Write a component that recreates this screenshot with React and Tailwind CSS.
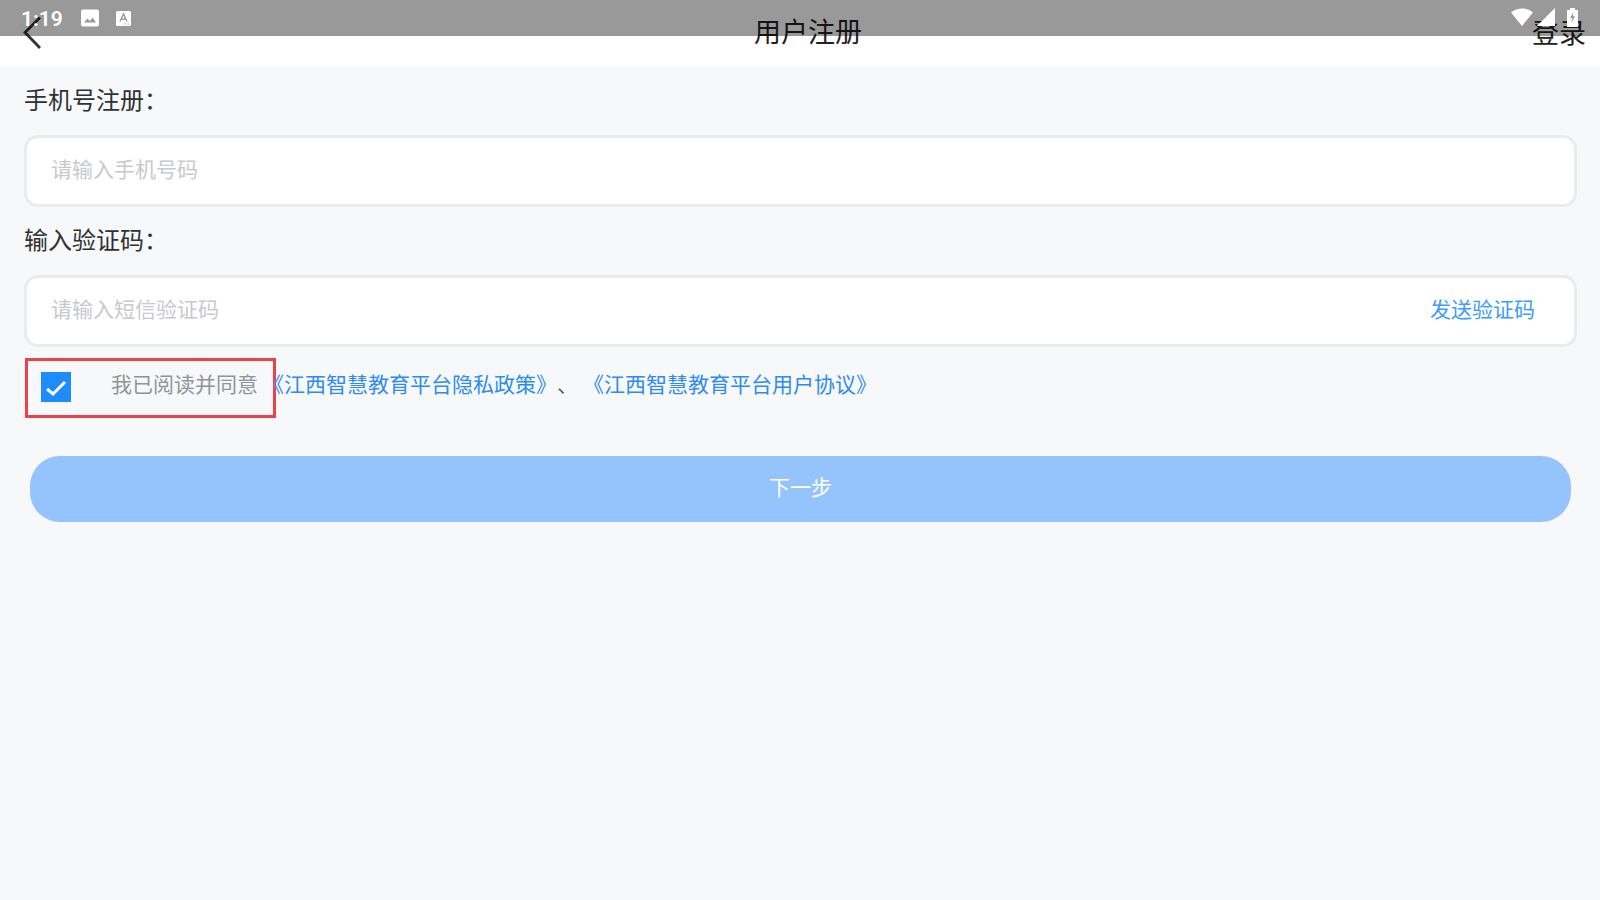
import React from 'react';

const cjk = '"Noto Sans CJK SC", "Noto Sans", sans-serif';

// the bar is see-through, so the page title shows under it and the white icons sit on top
function StatusBar() {
  return (
    <div className="absolute top-0 left-0 right-0 h-[36px] bg-black/40 flex items-center justify-between pl-[21px] pr-[22px]">
      <div className="flex items-center">
        <span className="mt-[3px] text-[21px] font-semibold text-white font-['Roboto'] w-[60px]">1:19</span>
        <svg width="18" height="18" viewBox="0 0 18 18" className="mr-[17px]">
          <rect x="0" y="0.5" width="18" height="17" rx="2" fill="#fff" />
          <path d="M3 13.5 L6.5 9.5 L9 12 L11.5 8.5 L15 13.5 Z" fill="#999" />
        </svg>
        <svg width="15" height="15" viewBox="0 0 15 15">
          <rect width="15" height="15" rx="1.5" fill="#fff" />
          <path d="M4 10.5 L7.5 3 L11 10.5 M5.3 8 H9.7" stroke="#999" strokeWidth="1.4" fill="none" />
          <path d="M8 13 h1 M10 13 h1 M12 13 h1" stroke="#999" strokeWidth="1" />
        </svg>
      </div>
      <div className="flex items-center mb-[2px]">
        <svg width="22" height="18" viewBox="0 0 22 18">
          <path d="M0 4.5 C6 -1 16 -1 22 4.5 L11 18 Z" fill="#fff" />
        </svg>
        <svg width="18" height="18" viewBox="0 0 18 18" className="ml-[4px]">
          <path d="M18 0 V18 H0 Z" fill="#fff" />
        </svg>
        <svg width="11" height="19" viewBox="0 0 11 19" className="ml-[12px]">
          <path d="M3 0 H8 V2 H11 V19 H0 V2 H3 Z" fill="#fff" />
          <path d="M6.5 4 L3 10 H5.2 L4.3 15 L8 8.2 H5.8 Z" fill="#999" />
        </svg>
      </div>
    </div>
  );
}

function Field({ label, placeholder, action }) {
  return (
    <div>
      <div className="h-[34px] mb-[19px] flex items-center text-[24px] leading-[34px] text-[#303133]">{label}</div>
      <div className="h-[72px] bg-white border-[3px] border-[#e9ebee] rounded-[14px] flex items-center justify-between pl-[24px] pr-[39px] pb-[5px]">
        <span className="text-[21px] text-[#c8c9cc]">{placeholder}</span>
        {action && <span className="text-[21px] text-[#3c9cff]">{action}</span>}
      </div>
    </div>
  );
}

export default function App() {
  return (
    <div className="relative w-[1600px] h-[900px] overflow-hidden bg-[#f7f8fa]" style={{ fontFamily: cjk }}>
      <div className="relative h-[66px] bg-white flex items-start justify-between pl-[20px] pr-[14px] pt-[13px] text-[#222222]">
        <svg width="22" height="38" viewBox="0 0 22 38" className="mt-[1px]">
          <path d="M20 3.5 L5 18.5 L20 34" stroke="#333" strokeWidth="2.8" fill="none" />
        </svg>
        <span className="absolute left-[754px] top-[12px] text-[27px] leading-[38px]">用户注册</span>
        <span className="text-[27px] leading-[38px]">登录</span>
      </div>
      <StatusBar />

      <div className="pl-[24px] pr-[23px] pt-[16px] flex flex-col gap-[15px]">
        <Field label="手机号注册：" placeholder="请输入手机号码" />
        <Field label="输入验证码：" placeholder="请输入短信验证码" action="发送验证码" />
      </div>

      <div className="flex items-center ml-[25px] mt-[11px]">
        <div className="w-[251px] h-[60px] border-[3px] border-[#e8434b] flex items-center pl-[13px]">
          <div className="w-[30px] h-[30px] mb-[2px] bg-[#1e8cff] shrink-0">
            <svg width="30" height="30" viewBox="0 0 30 30">
              <path d="M6 17 L12 22 L24 10" stroke="#fff" strokeWidth="3" fill="none" />
            </svg>
          </div>
          <span className="ml-[40px] mb-[8px] text-[21px] text-[#909399] whitespace-nowrap">我已阅读并同意</span>
        </div>
        <span className="-ml-[13px] mb-[8px] text-[21px] text-[#2d8cf0] whitespace-nowrap">《江西智慧教育平台隐私政策》</span>
        <span className="mb-[8px] text-[21px] text-[#606266]">、</span>
        <span className="ml-[5px] mb-[8px] text-[21px] text-[#2d8cf0] whitespace-nowrap">《江西智慧教育平台用户协议》</span>
      </div>

      <button className="block ml-[30px] mt-[38px] w-[1541px] h-[66px] rounded-[30px] bg-[#95c4fd] text-white text-[21px] pb-[5px]">
        下一步
      </button>
    </div>
  );
}
